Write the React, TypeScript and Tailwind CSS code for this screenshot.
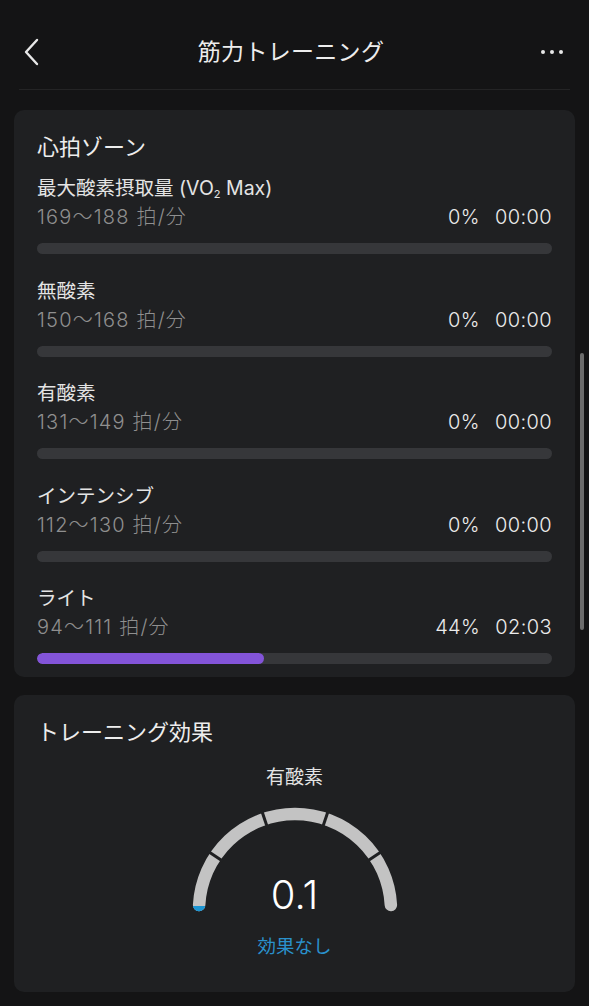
import React from 'react';

type Zone = { name: React.ReactNode; range: string; pct: number; time: string };

const zones: Zone[] = [
    { name: <>最大酸素摂取量 (VO<sub className="text-[11px] align-baseline relative top-[3px]">2</sub> Max)</>, range: '169～188 拍/分', pct: 0, time: '00:00' },
    { name: '無酸素', range: '150～168 拍/分', pct: 0, time: '00:00' },
    { name: '有酸素', range: '131～149 拍/分', pct: 0, time: '00:00' },
    { name: 'インテンシブ', range: '112～130 拍/分', pct: 0, time: '00:00' },
    { name: 'ライト', range: '94～111 拍/分', pct: 44, time: '02:03' },
];

const ZoneRow = ({ zone, last }: { zone: Zone; last: boolean }) => (
    <div className={last ? '' : 'mb-[23.5px]'}>
        <div className="h-[26px] leading-[26px] text-[19.5px] text-[#e4e4e4]">{zone.name}</div>
        <div className="mt-[2px] h-[28px] flex items-center justify-between text-[20px] font-light">
            <span className="text-[#8f8f8f] tracking-[1.2px]">{zone.range}</span>
            <span className="flex gap-[15px] text-[#ececec] tracking-[0.4px]">
                <span>{zone.pct}%</span>
                <span>{zone.time}</span>
            </span>
        </div>
        <div className="mt-[12px] h-[11px] rounded-full bg-[#36373a] overflow-hidden">
            <div className="h-full rounded-full bg-[#8354d9]" style={{ width: `${zone.pct}%` }} />
        </div>
    </div>
);

// point on the gauge circle, angle in degrees (0 = right, counter-clockwise)
const pt = (deg: number, r: number, cx = 120, cy = 115) => {
    const a = (deg * Math.PI) / 180;
    return [cx + r * Math.cos(a), cy - r * Math.sin(a)];
};

const Gauge = () => {
    const r = 96;
    const [sx, sy] = pt(177, r);
    const [ex, ey] = pt(3, r);
    const [bx, by] = pt(170, r);
    const gaps = [146, 108.5, 71.5, 34];
    return (
        <div className="relative w-[240px] h-[125px] mx-auto mt-[4px]">
            <svg width="240" height="125" viewBox="0 0 240 125" fill="none">
                <defs>
                    <clipPath id="capClip">
                        <rect x="0" y="111" width="60" height="14" />
                    </clipPath>
                </defs>
                <path d={`M ${sx} ${sy} A ${r} ${r} 0 0 1 ${ex} ${ey}`} stroke="#c3c3c3" strokeWidth="12.5" strokeLinecap="round" />
                {gaps.map((g) => {
                    const [x1, y1] = pt(g, r - 9);
                    const [x2, y2] = pt(g, r + 9);
                    return <line key={g} x1={x1} y1={y1} x2={x2} y2={y2} stroke="#1f2022" strokeWidth="3" />;
                })}
                <path
                    d={`M ${sx} ${sy} A ${r} ${r} 0 0 1 ${bx} ${by}`}
                    stroke="#1b95d3"
                    strokeWidth="12.5"
                    strokeLinecap="round"
                    clipPath="url(#capClip)"
                />
            </svg>
            <div className="absolute left-0 right-0 top-[76px] text-center text-[40px] leading-[48px] font-light text-white">0.1</div>
        </div>
    );
};

export default function App() {
    return (
        <div
            className="w-[589px] min-h-[1006px] bg-[#141415] relative overflow-hidden"
            style={{ fontFamily: 'Inter, "Noto Sans CJK JP", sans-serif' }}
        >
            <div className="pt-[15px] h-[89px] flex items-center justify-between px-[24px] relative">
                <svg width="18" height="28" viewBox="0 0 18 28" className="ml-[-1px]">
                    <path d="M14 2 L3 14 L14 26" stroke="#e8e8e8" strokeWidth="2.4" fill="none" strokeLinecap="round" strokeLinejoin="round" />
                </svg>
                <div className="text-[23px] text-[#ededed] tracking-[0.3px]">筋力トレーニング</div>
                <div className="flex gap-[5px] mr-[2px]">
                    <span className="w-[4px] h-[4px] rounded-full bg-[#e8e8e8]" />
                    <span className="w-[4px] h-[4px] rounded-full bg-[#e8e8e8]" />
                    <span className="w-[4px] h-[4px] rounded-full bg-[#e8e8e8]" />
                </div>
            </div>
            <div className="mx-[19px] h-px bg-[#242425]" />

            <div className="mx-[14px] mt-[20px] rounded-[10px] bg-[#1f2022] px-[23px] pt-[22px] pb-[13px]">
                <div className="h-[30px] leading-[30px] text-[22px] text-[#ededed] mb-[13px]">心拍ゾーン</div>
                {zones.map((z, i) => (
                    <ZoneRow key={i} zone={z} last={i === zones.length - 1} />
                ))}
            </div>

            <div className="mx-[14px] mt-[18px] rounded-[10px] bg-[#1f2022] px-[23px] pt-[22px] pb-[34px]">
                <div className="h-[30px] leading-[30px] text-[22px] text-[#ededed]">トレーニング効果</div>
                <div className="mt-[18px] h-[26px] leading-[26px] text-center text-[19px] text-[#e4e4e4]">有酸素</div>
                <Gauge />
                <div className="mt-[14px] h-[24px] leading-[24px] text-center text-[18.5px] text-[#2a91cc]">効果なし</div>
            </div>

            <div className="absolute left-[580px] top-[353px] w-[4px] h-[277px] rounded-full bg-[#6c6c6c]" />
        </div>
    );
}
